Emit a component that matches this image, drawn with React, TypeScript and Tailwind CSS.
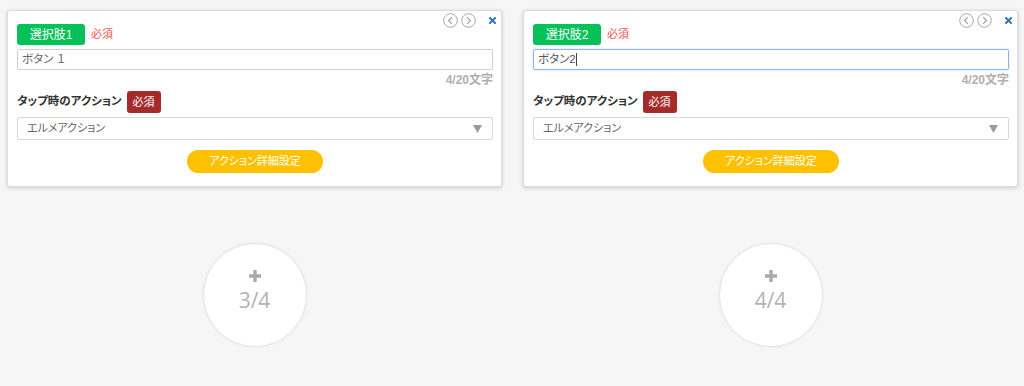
const font = {
  fontFamily: '"Liberation Sans", "Noto Sans CJK JP", sans-serif',
};

const ChevronCircle = ({ dir }: { dir: "left" | "right" }) => (
  <svg width="15" height="15" viewBox="0 0 15 15" className="block">
    <circle cx="7.5" cy="7.5" r="6.8" fill="white" stroke="#a8a8a8" strokeWidth="1" />
    {dir === "left" ? (
      <path d="M8.8 4.2 L5.6 7.5 L8.8 10.8" fill="none" stroke="#a0a0a0" strokeWidth="1.2" />
    ) : (
      <path d="M6.2 4.2 L9.4 7.5 L6.2 10.8" fill="none" stroke="#a0a0a0" strokeWidth="1.2" />
    )}
  </svg>
);

const CloseIcon = () => (
  <svg width="7" height="7" viewBox="0 0 7 7" className="block">
    <path d="M1 1 L6 6 M6 1 L1 6" stroke="#2f77c0" strokeWidth="2" strokeLinecap="square" />
  </svg>
);

type CardProps = { index: number; value: string; focused?: boolean };

const ChoiceCard = ({ index, value, focused }: CardProps) => {
  return (
    <div className="relative bg-white border border-[#dcdcdc] rounded-[3px] shadow-[0_1px_4px_rgba(0,0,0,0.18)] pl-[9px] pr-[8px] pt-[13px] pb-[13px]">
      <div className="absolute top-[2px] right-[5px] flex items-center gap-[3px]">
        <ChevronCircle dir="left" />
        <ChevronCircle dir="right" />
        <div className="ml-[10px]">
          <CloseIcon />
        </div>
      </div>

      <div className="flex items-center gap-[6px]">
        <div className="w-[68px] h-[21px] rounded-[3px] bg-[#06c15a] text-white text-[12px] flex items-center justify-center">
          選択肢{index}
        </div>
        <span className="text-[11px] text-[#f25555]">必須</span>
      </div>

      <div
        className={
          focused
            ? "mt-[4px] h-[21px] border border-[#8ab8e6] rounded-[2px] flex items-center px-[4px] text-[11.5px] text-[#555] shadow-[0_0_2px_rgba(90,150,220,0.4)]"
            : "mt-[4px] h-[21px] border border-[#cfcfcf] rounded-[2px] flex items-center px-[4px] text-[11.5px] text-[#666]"
        }
      >
        {value}
        {focused && <span className="w-px h-[13px] bg-[#444]" />}
      </div>

      <div className="mt-[3px] text-right text-[12px] font-bold text-[#b0b0b0] leading-[14px]">
        4/20文字
      </div>

      <div className="mt-[4px] flex items-center gap-[5px]">
        <span className="text-[11.5px] font-bold text-[#333]">タップ時のアクション</span>
        <span className="h-[22px] w-[34px] rounded-[3px] bg-[#a52b2b] text-white text-[11px] flex items-center justify-center">
          必須
        </span>
      </div>

      <div className="mt-[4px] h-[23px] border border-[#d8d8d8] rounded-[2px] flex items-center justify-between pl-[9px] pr-[10px] text-[11px] text-[#666]">
        <span>エルメアクション</span>
        <svg width="9" height="8" viewBox="0 0 9 8">
          <path d="M0 0 H9 L4.5 8 Z" fill="#9a9a9a" />
        </svg>
      </div>

      <div className="mt-[10px] flex justify-center">
        <div className="w-[136px] h-[23px] rounded-full bg-[#fdc100] text-white text-[11px] flex items-center justify-center">
          アクション詳細設定
        </div>
      </div>
    </div>
  );
};

const AddCircle = ({ label }: { label: string }) => (
  <div className="w-[104px] h-[104px] rounded-full bg-white border border-[#e6e6e6] shadow-[0_0_3px_rgba(0,0,0,0.06)] flex flex-col items-center justify-center">
    <svg width="12" height="12" viewBox="0 0 12 12" className="mt-[-8px]">
      <path d="M4.3 0 H7.7 V4.3 H12 V7.7 H7.7 V12 H4.3 V7.7 H0 V4.3 H4.3 Z" fill="#a9a9a9" />
    </svg>
    <div className="mt-[6px] text-[21px] text-[#b3b3b3] leading-[24px]" style={{ fontFamily: '"Open Sans", sans-serif' }}>
      {label}
    </div>
  </div>
);

export default function App() {
  const items = [
    { index: 1, value: "ボタン １", focused: false, label: "3/4" },
    { index: 2, value: "ボタン2", focused: true, label: "4/4" },
  ];
  return (
    <div
      className="w-[1024px] h-[386px] bg-[#f6f6f6] overflow-hidden [font-feature-settings:'palt']"
      style={font}
    >
      <div className="flex gap-[21px] pl-[7px] pt-[10px]">
        {items.map((it) => (
          <div key={it.index} className="w-[495px] flex flex-col">
            <ChoiceCard index={it.index} value={it.value} focused={it.focused} />
            <div className="mt-[56px] flex justify-center">
              <AddCircle label={it.label} />
            </div>
          </div>
        ))}
      </div>
    </div>
  );
}
